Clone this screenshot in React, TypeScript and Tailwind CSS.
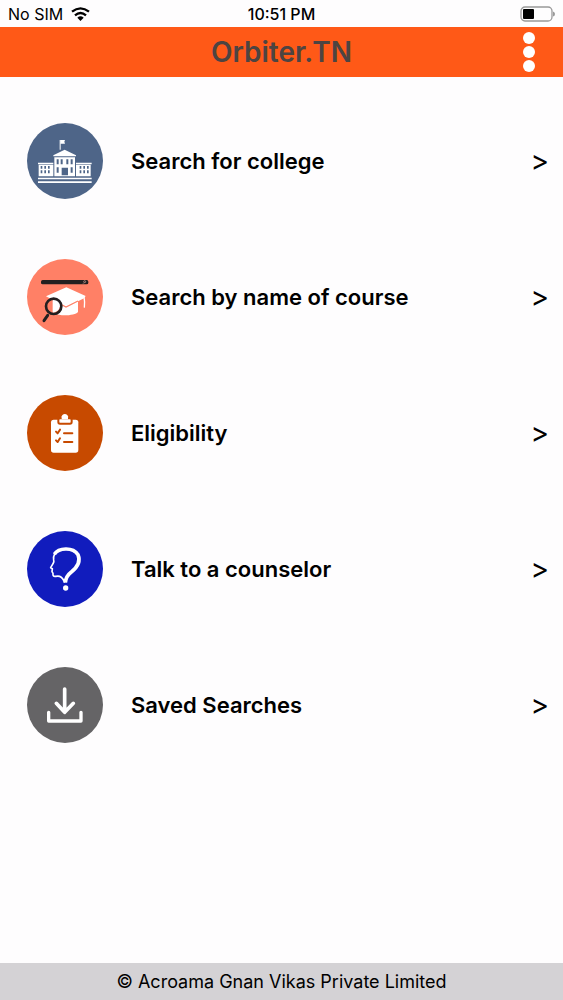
import type { ReactNode } from "react";

const CollegeIcon = () => (
  <svg viewBox="21 25 228 228" className="h-19 w-19 shrink-0 rounded-full bg-[#4e6588]" aria-hidden="true">
    <g fill="#fff">
      <path d="M119 76h3v29h-3z" />
      <path d="M121 76h14l-2 5 2 6h-14z" />
      <path d="M134 105l34 17v3H100v-3z" />
      <path d="M103 128h62v57h-62z" />
      <path d="M54 144h46v5H54zM168 144h47v5h-47z" />
      <path d="M56 150h44v35H56zM168 150h44v35h-44z" />
      <path d="M54 189h161v5H54zM54 200h161v5H54z" />
    </g>
    <g fill="#4e6588">
      <path d="M110 134h6v15h-6zM122 134h6v15h-6zM139 134h6v15h-6zM152 134h6v15h-6z" />
      <path d="M110 158h6v16h-6zM152 158h6v16h-6zM125 159h19v23h-19z" />
      <path d="M62 154h5v8h-5zM73 154h5v8h-5zM84 154h5v8h-5zM62 167h5v9h-5zM73 167h5v9h-5zM84 167h5v9h-5z" />
      <path d="M179 154h5v8h-5zM190 154h5v8h-5zM201 154h5v8h-5zM179 167h5v9h-5zM190 167h5v9h-5zM201 167h5v9h-5z" />
    </g>
  </svg>
);

const CourseIcon = () => (
  <svg viewBox="21 21 228 228" className="h-19 w-19 shrink-0 rounded-full bg-[#ff8066]" aria-hidden="true">
    <rect x="63" y="84" width="142" height="13" rx="5" fill="#231f20" />
    <circle cx="194" cy="89" r="3" fill="none" stroke="#d9a79b" strokeWidth="2" />
    <path d="M192 92l-3 3" stroke="#d9a79b" strokeWidth="2" />
    <path d="M98 144c10-9 65-9 76 0v36c-8 11-56 14-68 4l-8-6z" fill="#fff" />
    <path d="M78 133l61-27 58 26-5 7-54 27-12-8z" fill="#fff" />
    <path d="M121 156l17 9 36-18" fill="none" stroke="#ff8066" strokeWidth="4" />
    <path d="M192 134q3 16 1 33" fill="none" stroke="#fff" strokeWidth="4" />
    <circle cx="101" cy="163" r="23" fill="#ff8066" />
    <path d="M98 141c12-3 22 8 23 17l-23-9zM98 149l22 8c2 12-8 25-22 25z" fill="#fff" />
    <circle cx="101" cy="163" r="23" fill="none" stroke="#231f20" strokeWidth="8" />
    <path d="M83 190l-11 16" stroke="#231f20" strokeWidth="9" strokeLinecap="round" />
  </svg>
);

const EligibilityIcon = () => (
  <svg viewBox="21 21 228 228" className="h-19 w-19 shrink-0 rounded-full bg-[#c74a00]" aria-hidden="true">
    <rect x="93" y="95" width="82" height="99" rx="8" fill="#fff" />
    <path d="M124 90c0-16 21-16 21 0z" fill="#fff" />
    <rect x="115" y="91" width="40" height="16" rx="5" fill="#fff" stroke="#c74a00" strokeWidth="6" />
    <path d="M125 86h19v8h-19z" fill="#fff" />
    <path
      d="M108 131l5 5 7-11M108 157l5 5 7-11"
      fill="none"
      stroke="#c74a00"
      strokeWidth="6"
      strokeLinecap="round"
      strokeLinejoin="round"
    />
    <path d="M132 136h25M132 162h25" stroke="#c74a00" strokeWidth="6" strokeLinecap="round" />
  </svg>
);

const CounselorIcon = () => (
  <svg viewBox="21 21 228 228" className="h-19 w-19 shrink-0 rounded-full bg-[#111cbd]" aria-hidden="true">
    <path
      d="M103 91c13-20 55-23 71 1 10 24-6 41-20 52-12 9-17 19-18 32"
      fill="none"
      stroke="#fff"
      strokeWidth="11"
    />
    <path
      d="M104 90q-5 9-3 18 2 5-2 11l-7 12 5 3-1 9 3 5c-1 8 2 10 8 9 12-3 19 1 24 12l3 7"
      fill="none"
      stroke="#fff"
      strokeWidth="5"
      strokeLinejoin="round"
    />
    <circle cx="137" cy="192" r="8" fill="#fff" />
  </svg>
);

const SavedIcon = () => (
  <svg viewBox="21 21 228 228" className="h-19 w-19 shrink-0 rounded-full bg-[#656466]" aria-hidden="true">
    <g fill="none" stroke="#fff" strokeLinecap="round" strokeLinejoin="round">
      <path d="M134 87v70M109 130l25 27 26-27" strokeWidth="11" />
      <path d="M86 157v26h97v-26" strokeWidth="10" />
    </g>
  </svg>
);

const menuItems: { label: string; icon: ReactNode }[] = [
  { label: "Search for college", icon: <CollegeIcon /> },
  { label: "Search by name of course", icon: <CourseIcon /> },
  { label: "Eligibility", icon: <EligibilityIcon /> },
  { label: "Talk to a counselor", icon: <CounselorIcon /> },
  { label: "Saved Searches", icon: <SavedIcon /> },
];

const StatusBar = () => (
  <div className="grid h-[27px] grid-cols-3 items-center px-2 text-base">
    <div className="flex items-center gap-2">
      <span>No SIM</span>
      <svg viewBox="0 0 57 42" className="h-3.5 w-[19px]" aria-label="Wi-Fi">
        <g fill="none" stroke="#000" strokeWidth="7">
          <path d="M3 14q25.500-20 51 0" />
          <path d="M12 25q16.500-14 33 0" />
        </g>
        <path d="M19 32q9.500-8 19 0l-9.500 10z" />
      </svg>
    </div>
    <span className="text-center font-medium whitespace-nowrap">10:51 PM</span>
    <div className="flex justify-end">
      <svg viewBox="0 0 35 16" className="h-4 w-[35px]" aria-label="Battery">
        <rect x="1" y="1" width="31" height="14" rx="4" fill="none" stroke="#999" strokeWidth="1.300" />
        <rect x="3" y="3" width="11" height="10" rx="1" />
        <path d="M33 5.500q2 .5 2 2.500t-2 2.500z" fill="#999" />
      </svg>
    </div>
  </div>
);

const Header = () => (
  <header className="grid h-[50px] grid-cols-[1fr_auto_1fr] items-center bg-[#ff5917] px-5">
    <h1 className="col-start-2 text-[28px] font-semibold text-[#4d4442]">Orbiter.TN</h1>
    <button type="button" aria-label="More options" className="flex flex-col gap-0.5 justify-self-end px-2">
      <span className="h-3 w-3 rounded-full bg-white" />
      <span className="h-3 w-3 rounded-full bg-white" />
      <span className="h-3 w-3 rounded-full bg-white" />
    </button>
  </header>
);

export default function App() {
  return (
    <div className="flex min-h-screen flex-col bg-[#fefdfe] font-[Inter,sans-serif] text-black">
      <StatusBar />
      <Header />

      <main className="flex-1 pt-4">
        <nav>
          {menuItems.map((item) => (
            <a key={item.label} href="#" className="flex h-34 items-center gap-7 pr-3.5 pl-[27px]">
              {item.icon}
              <span className="flex-1 text-[22px] font-semibold">{item.label}</span>
              <span className="text-[28px]">&gt;</span>
            </a>
          ))}
        </nav>
      </main>

      <footer className="flex h-[37px] items-center justify-center bg-[#d4d2d5] text-lg">
        © Acroama Gnan Vikas Private Limited
      </footer>
    </div>
  );
}
